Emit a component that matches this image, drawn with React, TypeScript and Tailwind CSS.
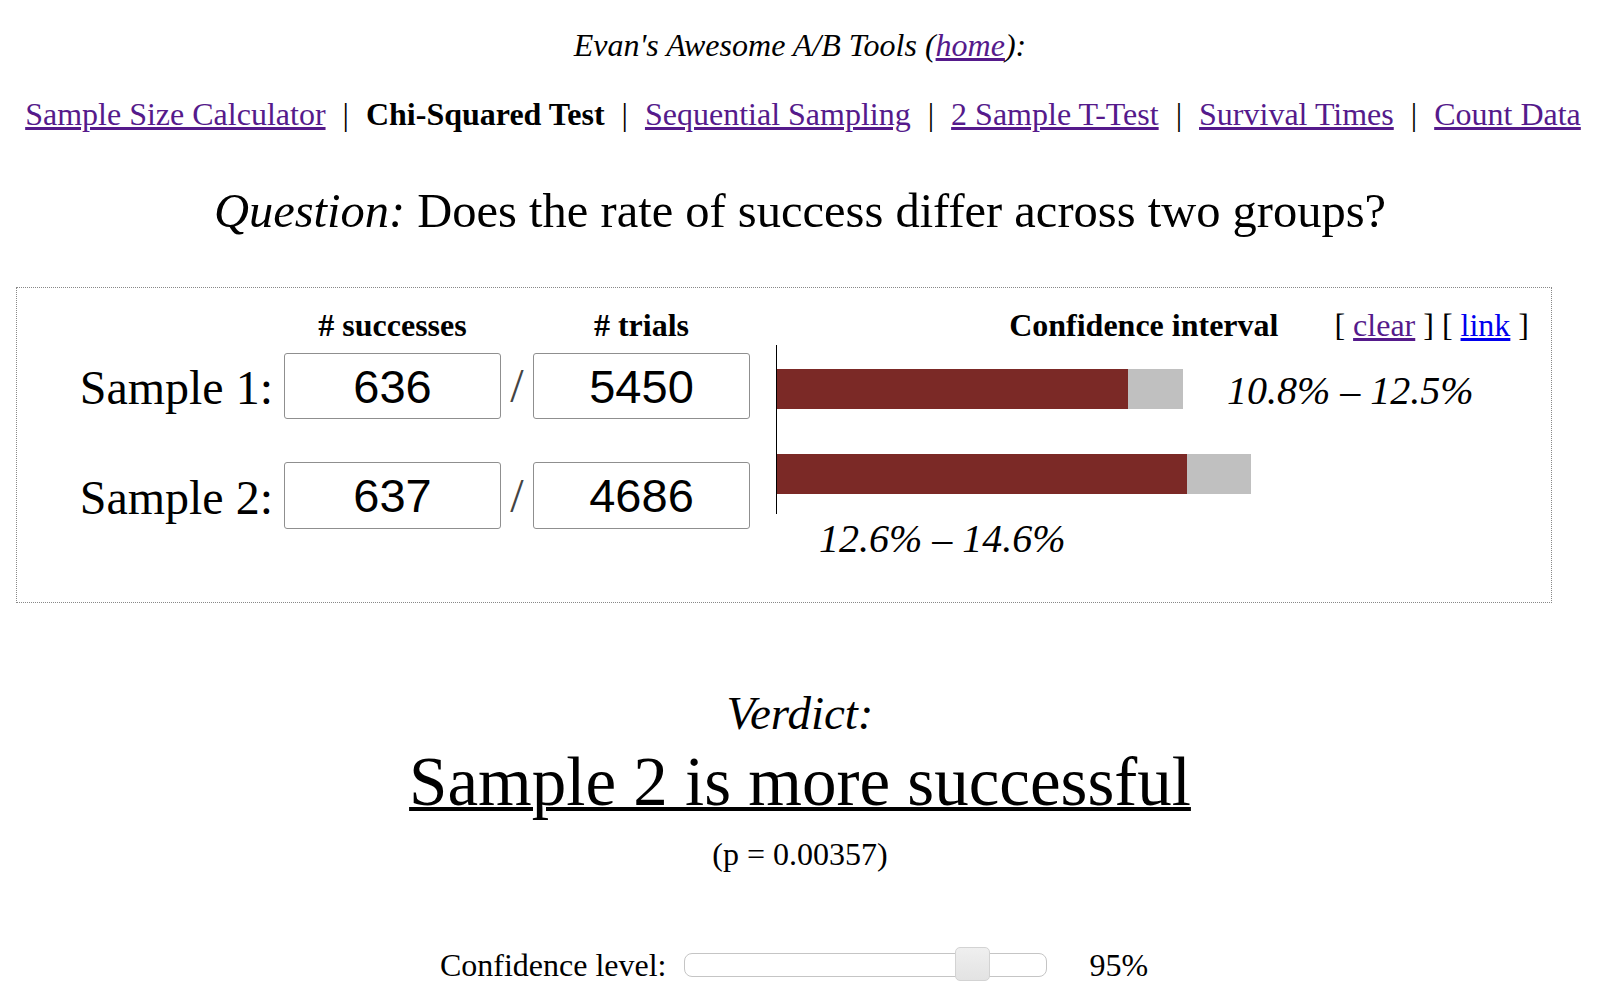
import React from 'react';

const VISITED = 'text-[#551a8b]';

const navItems = [
  { label: 'Sample Size Calculator', current: false },
  { label: 'Chi-Squared Test', current: true },
  { label: 'Sequential Sampling', current: false },
  { label: '2 Sample T-Test', current: false },
  { label: 'Survival Times', current: false },
  { label: 'Count Data', current: false },
];

const samples = [
  { name: 'Sample 1:', successes: '636', trials: '5450', rowClass: 'mt-[12px] h-[66px]' },
  { name: 'Sample 2:', successes: '637', trials: '4686', rowClass: 'mt-[43px] h-[67px]' },
];

const NumberBox = ({ value }: { value: string }) => (
  <input
    readOnly
    value={value}
    className="w-[217px] h-full border border-[#8f8f8f] rounded-[3px] bg-white text-center text-[47px] leading-none text-black font-['Liberation_Sans',Arial,sans-serif] outline-none"
  />
);

export default function App() {
  return (
    <div className="min-h-screen bg-white text-black font-['Liberation_Serif','Times_New_Roman',serif]">
      {/* tool header */}
      <div className="pt-[29px] text-center text-[32px] leading-none italic">
        Evan's Awesome A/B Tools (<a href="#" className={`${VISITED} underline`}>home</a>):
      </div>

      <nav className="mt-[37px] pl-[6px] flex justify-center text-[32px] leading-none whitespace-nowrap">
        {navItems.map((item, i) => (
          <React.Fragment key={item.label}>
            {i > 0 && <span className="mx-[17px]">|</span>}
            {item.current ? (
              <span className="font-bold">{item.label}</span>
            ) : (
              <a href="#" className={`${VISITED} underline`}>{item.label}</a>
            )}
          </React.Fragment>
        ))}
      </nav>

      <div className="mt-[57px] h-[48px] text-center text-[48.5px] leading-none">
        <i>Question:</i> Does the rate of success differ across two groups?
      </div>

      {/* input box */}
      <div className="mt-[52px] ml-[16px] w-[1536px] h-[316px] border border-dotted border-[#888] pt-[21px] flex">
        <div className="w-[733px]">
          <div className="grid grid-cols-[267px_217px_32px_217px] h-[32px] text-[32px] font-bold leading-none">
            <div />
            <div className="text-center"># successes</div>
            <div />
            <div className="text-center"># trials</div>
          </div>
          {samples.map((s) => (
            <div key={s.name} className={`flex items-center ${s.rowClass}`}>
              <div className="w-[267px] mt-[4px] pr-[11px] text-right text-[48px] leading-none">{s.name}</div>
              <NumberBox value={s.successes} />
              <div className="w-[32px] text-center text-[48px] leading-none text-[#444]">/</div>
              <NumberBox value={s.trials} />
            </div>
          ))}
        </div>

        <div className="ml-[26px] flex-1">
          <div className="flex justify-end h-[32px] pr-[22px] text-[32px] leading-none whitespace-nowrap">
            <span className="font-bold">Confidence interval</span>
            <span className="ml-[56px]">
              [ <a href="#" className={`${VISITED} underline`}>clear</a> ] [{' '}
              <a href="#" className="text-[#0000ee] underline">link</a> ]
            </span>
          </div>
          <div className="mt-[4px] h-[169px] border-l border-black pt-[24px]">
            <div className="flex items-center h-[40px]">
              <div className="w-[351px] h-full bg-[#7b2926]" />
              <div className="w-[55px] h-full bg-[#c0c0c0]" />
              <span className="ml-[44px] mt-[4px] text-[40px] italic leading-none whitespace-nowrap">10.8% – 12.5%</span>
            </div>
            <div className="mt-[45px] flex h-[40px]">
              <div className="w-[410px] h-full bg-[#7b2926]" />
              <div className="w-[64px] h-full bg-[#c0c0c0]" />
            </div>
          </div>
          <div className="mt-[5px] ml-[43px] text-[40px] italic leading-none">12.6% – 14.6%</div>
        </div>
      </div>

      {/* verdict */}
      <div className="mt-[87px] text-center text-[47px] leading-none italic">Verdict:</div>
      <div className="mt-[11px] text-center text-[69px] leading-none">
        <span className="underline decoration-[4px]">Sample 2 is more successful</span>
      </div>
      <div className="mt-[21px] text-center text-[32px] leading-none">(p = 0.00357)</div>

      <div className="mt-[78px] h-[34px] flex items-center justify-center pr-[12px] text-[32px] leading-none">
        <span>Confidence level:</span>
        <div className="relative ml-[18px] w-[363px] h-[24px] rounded-[8px] border border-[#c5c5c5] bg-white">
          <div className="absolute left-[270px] top-[-7px] w-[35px] h-[34px] rounded-[5px] border border-[#d3d3d3] bg-linear-to-b from-[#efefef] to-[#e3e3e3]" />
        </div>
        <span className="ml-[42px]">95%</span>
      </div>
    </div>
  );
}
